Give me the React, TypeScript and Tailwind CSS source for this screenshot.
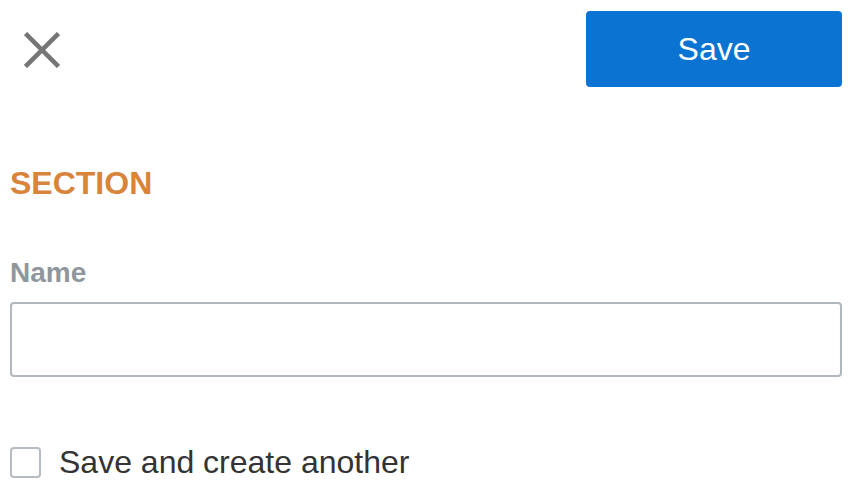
export default function App() {
  return (
    <div className="min-h-[484px] w-[852px] bg-white px-[10px] pt-[11px] font-['Liberation_Sans',Arial,sans-serif]">
      <div className="flex items-start justify-between">
        <button className="ml-[14px] mt-[21px] h-[36px] w-[36px] text-[#767676]" aria-label="Close">
          <svg viewBox="0 0 36 36" width="36" height="36" fill="none" stroke="currentColor" strokeWidth="4.5">
            <path d="M1.5 1.5L34.5 34.5M34.5 1.5L1.5 34.5" />
          </svg>
        </button>
        <button className="h-[76px] w-[256px] rounded-[4px] bg-[#0b73d1] text-[32px] leading-none text-white">
          Save
        </button>
      </div>

      <h2 className="mt-[80px] text-[32px] font-bold leading-none text-[#d8843b]">SECTION</h2>

      <label className="mt-[60px] block text-[28px] font-bold leading-none text-[#8f969d]">Name</label>
      <input
        type="text"
        className="mt-[15px] block h-[75px] w-full rounded-[4px] border-2 border-[#b0b7be] bg-white px-3 text-[32px] outline-none"
      />

      <label className="mt-[69px] flex items-center gap-[18px]">
        <span className="h-[31px] w-[31px] rounded-[4px] border-2 border-[#b4bbc2] bg-white" />
        <span className="text-[32px] leading-none text-[#333333]">Save and create another</span>
      </label>
    </div>
  );
}
